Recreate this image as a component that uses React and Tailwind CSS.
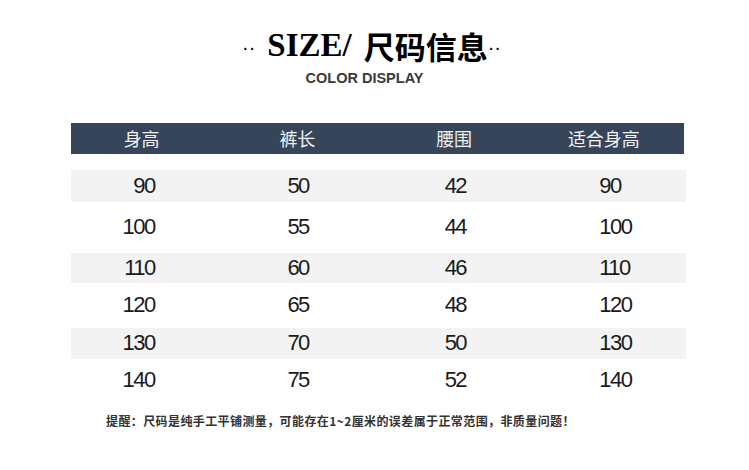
import React from "react";

const rows = [
  { v: ["90", "50", "42", "90"], gray: true, h: "h-[32px]" },
  { v: ["100", "55", "44", "100"], gray: false, h: "h-[51px]" },
  { v: ["110", "60", "46", "110"], gray: true, h: "h-[30px]" },
  { v: ["120", "65", "48", "120"], gray: false, h: "h-[45px]" },
  { v: ["130", "70", "50", "130"], gray: true, h: "h-[31px]" },
  { v: ["140", "75", "52", "140"], gray: false, h: "h-[42px]" },
];

export default function App() {
  const cjk = { fontFamily: '"Noto Sans CJK SC", "Noto Sans", sans-serif' };
  const num = { fontFamily: '"Liberation Sans", Arial, sans-serif' };
  return (
    <div className="w-[749px] h-[470px] bg-white overflow-hidden flex flex-col">
      {/* Title */}
      <div className="flex items-center justify-center pt-[28px] h-[62px] pr-[6px] text-black">
        <span className="text-[20px] leading-none mr-[12px] mt-[4px]" style={num}>··</span>
        <span
          className="text-[33px] font-bold leading-none"
          style={{ fontFamily: '"Liberation Serif", "Times New Roman", serif' }}
        >
          SIZE/
        </span>
        <span className="text-[31px] font-bold leading-none ml-[12px]" style={cjk}>
          尺码信息
        </span>
        <span className="text-[20px] leading-none mt-[4px]" style={num}>··</span>
      </div>
      <div className="flex justify-center pr-[20px] mt-[9px]">
        <span className="text-[14.5px] font-bold text-[#3a3a3a] leading-none" style={num}>
          COLOR DISPLAY
        </span>
      </div>

      {/* Table */}
      <div className="ml-[71px] w-[613px] mt-[37px]">
        <div className="h-[31px] bg-[#36455a] grid grid-cols-4 items-center text-[#f2f2f2] text-[18px] leading-none" style={cjk}>
          <div className="text-center pr-[12px]">身高</div>
          <div className="text-center pr-[7px]">裤长</div>
          <div className="text-center">腰围</div>
          <div className="text-center pr-[7px]">适合身高</div>
        </div>
        <div className="mt-[16px] flex flex-col">
          {rows.map((r, i) => (
            <div
              key={i}
              className={`${r.h} ${r.gray ? "bg-[#f3f3f3]" : "bg-white"} w-[615px] grid grid-cols-4 items-center text-[22px] leading-none text-[#1a1a1a] tracking-[-1.5px]`}
              style={num}
            >
              <div className="text-right pr-[70px]">{r.v[0]}</div>
              <div className="text-center pr-[7px]">{r.v[1]}</div>
              <div className="text-center">{r.v[2]}</div>
              <div className="text-left pl-[67px]">{r.v[3]}</div>
            </div>
          ))}
        </div>
      </div>

      {/* Footer note */}
      <div className="pl-[106px] mt-[14px] text-[12px] font-semibold text-[#333] leading-none tracking-[0.4px]" style={cjk}>
        提醒：尺码是纯手工平铺测量，可能存在1~2厘米的误差属于正常范围，非质量问题！
      </div>
    </div>
  );
}
